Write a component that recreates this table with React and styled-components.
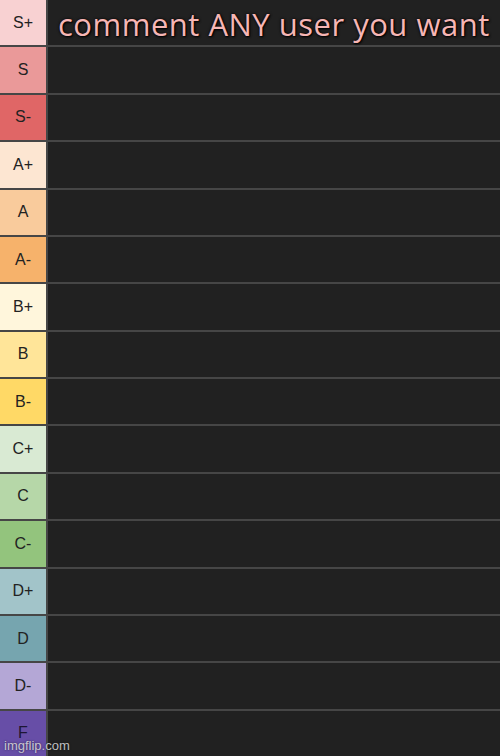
import React from "react";
import styled, { createGlobalStyle } from "styled-components";

const GlobalStyle = createGlobalStyle`
  html, body {
    margin: 0;
    padding: 0;
    background: #212121;
  }
`;

const Board = styled.div`
  position: relative;
  width: 500px;
  height: 756px;
  display: flex;
  flex-direction: column;
  gap: 2px;
  background: #464646;
  overflow: hidden;
`;

const Row = styled.div`
  flex: 1;
  display: flex;
  gap: 2px;
`;

const Label = styled.div`
  width: 46px;
  flex-shrink: 0;
  background: ${(props) => props.color};
  color: ${(props) => (props.dark ? "#1d1633" : "#222222")};
  display: flex;
  align-items: center;
  justify-content: center;
  font-family: "Liberation Sans", Arial, sans-serif;
  font-size: 16px;
`;

const Content = styled.div`
  flex: 1;
  background: #212121;
  display: flex;
  align-items: center;
  padding-left: 10px;
`;

const Title = styled.div`
  font-family: "Open Sans", sans-serif;
  font-size: 31px;
  line-height: 1;
  color: #f6b6b5;
  white-space: nowrap;
  letter-spacing: 0.5px;
  margin-top: 3px;
  text-shadow: 0 0 3px #000, 1px 1px 2px #000;
`;

const Watermark = styled.div`
  position: absolute;
  left: 4px;
  bottom: 3px;
  font-family: "Liberation Sans", Arial, sans-serif;
  font-size: 13px;
  color: rgba(235, 235, 235, 0.8);
  text-shadow: 0 0 2px rgba(0, 0, 0, 0.6);
`;

const tiers = [
  { name: "S+", color: "#f8d1d2" },
  { name: "S", color: "#ea9999" },
  { name: "S-", color: "#e06666" },
  { name: "A+", color: "#fde6d2" },
  { name: "A", color: "#f9cb9c" },
  { name: "A-", color: "#f6b26b" },
  { name: "B+", color: "#fff6dc" },
  { name: "B", color: "#ffe599" },
  { name: "B-", color: "#ffd966" },
  { name: "C+", color: "#d9ead3" },
  { name: "C", color: "#b6d7a8" },
  { name: "C-", color: "#93c47d" },
  { name: "D+", color: "#a2c4c9" },
  { name: "D", color: "#76a5af" },
  { name: "D-", color: "#b4a7d6" },
  { name: "F", color: "#674ea7", dark: true },
];

const App = () => {
  return (
    <>
      <GlobalStyle />
      <Board>
        {tiers.map((tier, index) => (
          <Row key={tier.name}>
            <Label color={tier.color} dark={tier.dark}>
              {tier.name}
            </Label>
            <Content>
              {index === 0 && <Title>comment ANY user you want</Title>}
            </Content>
          </Row>
        ))}
        <Watermark>imgflip.com</Watermark>
      </Board>
    </>
  );
};

export default App;
